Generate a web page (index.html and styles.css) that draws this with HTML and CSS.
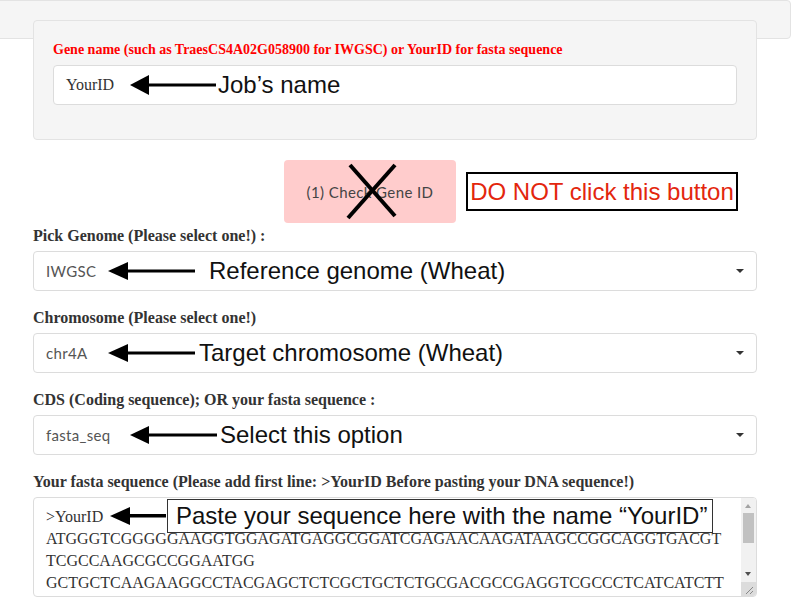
FILE: index.html
```html
<!DOCTYPE html>
<html>
<head>
<meta charset="utf-8">
<link rel="stylesheet" href="styles.css">
</head>
<body>
<div class="topbar"></div>
<main class="page">
  <section class="well">
    <label class="lbl red">Gene name (such as TraesCS4A02G058900 for IWGSC) or YourID for fasta sequence</label>
    <div class="ctl">
      <div class="input">YourID</div>
      <div class="anno anno-job">
        <svg class="arrow" width="86" height="20" viewBox="0 0 86 20"><polygon points="0,10 19,0 19,20"/><rect x="18" y="8.5" width="68" height="3"/></svg>
        <span class="anno-text">Job’s name</span>
      </div>
    </div>
  </section>

  <div class="btnrow">
    <div class="btn">(1) Check Gene ID
      <svg class="cross" width="172" height="63" viewBox="0 0 172 63"><line x1="66" y1="5" x2="111" y2="56"/><line x1="111" y1="5" x2="64" y2="58"/></svg>
    </div>
    <div class="warn">DO NOT click this button</div>
  </div>

  <div class="group">
    <label class="lbl">Pick Genome (Please select one!) :</label>
    <div class="ctl">
      <div class="select"><span>IWGSC</span><span class="caret"></span></div>
      <div class="anno anno-ref">
        <svg class="arrow" width="87" height="20" viewBox="0 0 87 20"><polygon points="0,10 20,1 20,19"/><rect x="19" y="8.5" width="68" height="3"/></svg>
        <span class="anno-text">Reference genome (Wheat)</span>
      </div>
    </div>
  </div>

  <div class="group">
    <label class="lbl">Chromosome (Please select one!)</label>
    <div class="ctl">
      <div class="select"><span>chr4A</span><span class="caret"></span></div>
      <div class="anno anno-chr">
        <svg class="arrow" width="87" height="20" viewBox="0 0 87 20"><polygon points="0,10 20,1 20,19"/><rect x="19" y="8.5" width="68" height="3"/></svg>
        <span class="anno-text">Target chromosome (Wheat)</span>
      </div>
    </div>
  </div>

  <div class="group">
    <label class="lbl">CDS (Coding sequence); OR your fasta sequence :</label>
    <div class="ctl">
      <div class="select"><span>fasta_seq</span><span class="caret"></span></div>
      <div class="anno anno-opt">
        <svg class="arrow" width="87" height="20" viewBox="0 0 87 20"><polygon points="0,10 19,1 19,19"/><rect x="18" y="8.5" width="69" height="3"/></svg>
        <span class="anno-text">Select this option</span>
      </div>
    </div>
  </div>

  <div class="group">
    <label class="lbl">Your fasta sequence (Please add first line: &gt;YourID Before pasting your DNA sequence!)</label>
    <div class="ctl">
      <div class="textarea">
        <div class="seq">&gt;YourID
ATGGGTCGGGGGAAGGTGGAGATGAGGCGGATCGAGAACAAGATAAGCCGGCAGGTGACGT
TCGCCAAGCGCCGGAATGG
GCTGCTCAAGAAGGCCTACGAGCTCTCGCTGCTCTGCGACGCCGAGGTCGCCCTCATCATCTT</div>
        <div class="scrollbar">
          <span class="sb-up"></span>
          <span class="sb-thumb"></span>
          <span class="sb-down"></span>
        </div>
        <div class="resizer">
          <svg width="15" height="14" viewBox="0 0 15 14"><line x1="5" y1="12" x2="12" y2="5"/><line x1="9" y1="12" x2="12" y2="9"/></svg>
        </div>
      </div>
      <div class="anno anno-fasta">
        <svg class="arrow" width="56" height="20" viewBox="0 0 56 20"><polygon points="0,10 20,1 20,19"/><rect x="19" y="8" width="37" height="3.5"/></svg>
        <span class="anno-box">Paste your sequence here with the name “YourID”</span>
      </div>
    </div>
  </div>
</main>
</body>
</html>
```

FILE: styles.css
```css
html, body {
  margin: 0;
  padding: 0;
}
body {
  font-family: "Liberation Serif", "Times New Roman", serif;
  color: #333;
  background: #fff;
  overflow: hidden;
}
.topbar {
  box-sizing: border-box;
  height: 39px;
  width: 795px;
  margin-left: -4px;
  background: #f5f5f5;
  border: 1px solid #e3e3e3;
  border-radius: 4px;
}
.page {
  width: 724px;
  margin: -19px 0 0 33px;
}
.well {
  background: #f5f5f5;
  border: 1px solid #e3e3e3;
  border-radius: 4px;
  padding: 19px 19px 34px;
}
.lbl {
  display: block;
  font-weight: bold;
  font-size: 16px;
  line-height: 20px;
  margin-bottom: 5px;
  white-space: nowrap;
}
.well .lbl {
  font-size: 14px;
}
.red {
  color: #ff0000;
}
.ctl {
  position: relative;
}
.input {
  box-sizing: border-box;
  height: 40px;
  background: #fff;
  border: 1px solid #dcdcdc;
  border-radius: 4px;
  padding: 0 12px;
  display: flex;
  align-items: center;
  font-size: 16px;
  color: #333;
}
.btnrow {
  display: flex;
  align-items: center;
  gap: 10px;
  margin: 20px 0 3px;
  padding-left: 251px;
}
.btn {
  position: relative;
  box-sizing: border-box;
  width: 172px;
  height: 63px;
  background: #ffcccc;
  border-radius: 4px;
  display: flex;
  align-items: center;
  justify-content: center;
  font-family: Lato, "Open Sans", sans-serif;
  font-size: 15px;
  letter-spacing: 0.4px;
  color: #444;
}
.cross {
  position: absolute;
  left: 0;
  top: 0;
}
.cross line {
  stroke: #000;
  stroke-width: 4;
}
.warn {
  box-sizing: border-box;
  width: 272px;
  height: 39px;
  border: 2px solid #000;
  background: #fff;
  display: flex;
  align-items: center;
  justify-content: center;
  font-family: "Liberation Sans", Arial, sans-serif;
  font-size: 24px;
  color: #e3260d;
  white-space: nowrap;
}
.group {
  margin-bottom: 17px;
}
.select {
  box-sizing: border-box;
  height: 40px;
  background: #fff;
  border: 1px solid #dcdcdc;
  border-radius: 4px;
  padding: 0 12px 0 12px;
  display: flex;
  align-items: center;
  justify-content: space-between;
  font-family: Lato, "Open Sans", sans-serif;
  font-size: 15px;
  letter-spacing: 0.3px;
  color: #555;
}
.caret {
  width: 0;
  height: 0;
  border-top: 4px solid #333;
  border-left: 4px solid transparent;
  border-right: 4px solid transparent;
}
.anno {
  position: absolute;
  top: 0;
  height: 40px;
  display: flex;
  align-items: center;
}
.arrow {
  display: block;
  flex: none;
}
.arrow polygon, .arrow rect {
  fill: #000;
}
.anno-text {
  font-family: "Liberation Sans", Arial, sans-serif;
  font-size: 24px;
  color: #111;
  white-space: nowrap;
}
.anno-job {
  left: 77px;
  gap: 2px;
}
.anno-ref {
  left: 75px;
  gap: 14px;
}
.anno-chr {
  left: 75px;
  gap: 4px;
}
.anno-opt {
  left: 97px;
  gap: 3px;
}
.textarea {
  position: relative;
  box-sizing: border-box;
  height: 100px;
  background: #fff;
  border: 1px solid #dcdcdc;
  border-radius: 4px;
  overflow: hidden;
}
.seq {
  padding: 8px 12px;
  font-size: 16px;
  line-height: 22px;
  white-space: pre;
  color: #333;
}
.scrollbar {
  position: absolute;
  right: 0;
  top: 0;
  width: 15px;
  height: 84px;
  background: #f1f1f1;
}
.sb-up, .sb-down {
  position: absolute;
  left: 4px;
  width: 0;
  height: 0;
  border-left: 3.5px solid transparent;
  border-right: 3.5px solid transparent;
}
.sb-up {
  top: 6px;
  border-bottom: 4px solid #a3a3a3;
}
.sb-down {
  bottom: 6px;
  border-top: 4px solid #505050;
}
.sb-thumb {
  position: absolute;
  left: 2px;
  top: 15px;
  width: 11px;
  height: 30px;
  background: #c1c1c1;
}
.resizer {
  position: absolute;
  right: 0;
  bottom: 0;
  width: 15px;
  height: 14px;
  background: #dcdcdc;
}
.resizer svg {
  display: block;
}
.resizer line {
  stroke: #888;
  stroke-width: 1;
}
.anno-fasta {
  left: 77px;
  top: 2px;
  height: 34px;
  gap: 1px;
}
.anno-box {
  box-sizing: border-box;
  height: 34px;
  width: 546px;
  border: 1px solid #333;
  background: #fff;
  display: flex;
  align-items: center;
  padding-left: 8px;
  font-family: "Liberation Sans", Arial, sans-serif;
  font-size: 24px;
  color: #111;
  white-space: nowrap;
}
```
